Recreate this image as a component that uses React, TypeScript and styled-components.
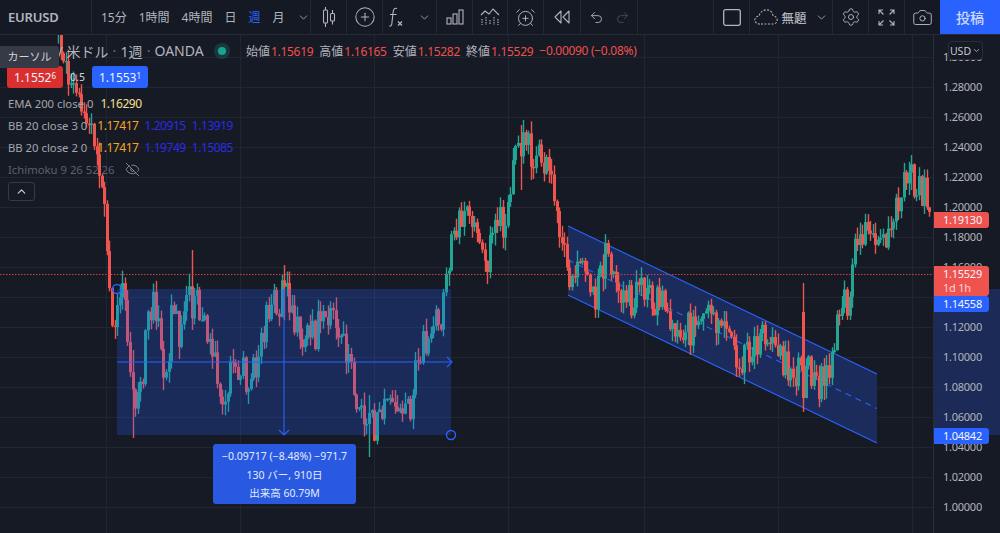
import React from 'react';
import styled, { createGlobalStyle } from 'styled-components';
import { AlarmClockPlus, Camera, ChevronDown, ChevronUp, CirclePlus, EyeOff, Redo2, Settings, Undo2 } from 'lucide-react';

const GlobalStyle = createGlobalStyle`
  html, body { margin: 0; padding: 0; background: #161a25; }
  body { font-family: 'Noto Sans', 'Noto Sans CJK JP', sans-serif; overflow: hidden; }
`;

// close prices traced in page pixels
const trace: [number, number][] = [
  [58, 35], [70, 85], [85, 115], [100, 170], [105, 210], [110, 285], [113, 320], [118, 305], [125, 300], [130, 380],
  [137, 415], [145, 350], [152, 298], [160, 335], [165, 385], [172, 305], [180, 335], [190, 300], [200, 310], [210, 340],
  [222, 408], [232, 370], [240, 362], [250, 385], [262, 340], [270, 300], [285, 297], [295, 322], [305, 345], [315, 330],
  [330, 312], [345, 350], [355, 392], [370, 432], [380, 410], [395, 392], [408, 410], [418, 365], [430, 322], [440, 318],
  [447, 270], [455, 235], [465, 205], [475, 235], [485, 265], [495, 215], [505, 222], [515, 150], [522, 138], [535, 160],
  [548, 165], [555, 220], [565, 265], [572, 272], [585, 272], [595, 292], [605, 258], [615, 295], [625, 305], [640, 295],
  [650, 295], [665, 312], [680, 322], [690, 328], [705, 305], [720, 332], [740, 365], [755, 340], [770, 345], [785, 365],
  [795, 385], [803, 335], [810, 382], [825, 382], [835, 330], [848, 300], [855, 228], [870, 230], [885, 255], [895, 215],
  [905, 170], [915, 185], [932, 197],
];

const spikes: Record<number, [number, number]> = {
  191: [250, 330], 284: [265, 320], 369: [395, 457], 520: [125, 190], 803: [283, 412], 910: [155, 190], 530: [132, 180],
  132: [350, 438], 825: [370, 400],
};

type Bar = { x: number; o: number; c: number; h: number; l: number };

const buildBars = (): Bar[] => {
  let seed = 4711;
  const rnd = () => {
    seed = (seed * 16807) % 2147483647;
    return seed / 2147483647;
  };
  const at = (x: number) => {
    const i = trace.findIndex((p) => p[0] >= x);
    if (i <= 0) return trace[0][1];
    const [x0, y0] = trace[i - 1];
    const [x1, y1] = trace[i];
    return y0 + ((y1 - y0) * (x - x0)) / (x1 - x0);
  };
  const bars: Bar[] = [];
  let prev = at(58);
  for (let x = 58; x < 930; x += 2.57) {
    let c = at(x) + (rnd() - 0.5) * 38;
    let o = prev;
    let h = Math.min(o, c) - rnd() * 13;
    let l = Math.max(o, c) + rnd() * 13;
    const key = Object.keys(spikes).find((k) => Math.abs(Number(k) - x) < 1.3);
    if (key) {
      h = Math.min(h, spikes[Number(key)][0]);
      l = Math.max(l, spikes[Number(key)][1]);
    }
    // the long red week inside the channel
    if (key === '803') {
      o = 312;
      c = 398;
    }
    bars.push({ x: Math.round(x), o, c, h, l });
    prev = c;
  }
  return bars;
};

const bars = buildBars();
const gridYs = Array.from({ length: 16 }, (_, i) => 57 + i * 30);
const gridXs = [106, 240, 374, 508, 644, 778, 912];
const axisPrices = [
  '1.30000', '1.28000', '1.26000', '1.24000', '1.22000', '1.20000', '1.18000', '1.16000', '',
  '1.12000', '1.10000', '1.08000', '1.06000', '1.04000', '1.02000', '1.00000',
];

const Page = styled.div`
  width: 1000px;
  height: 533px;
  display: flex;
  flex-direction: column;
  overflow: hidden;
  background: #161a25;
  color: #b2b5be;
`;

const Toolbar = styled.header`
  display: flex;
  height: 34px;
  flex: none;
  background: #151924;
  border-bottom: 1px solid #262a36;
`;

const Group = styled.div<{ $w: number; $gap?: number; $plain?: boolean }>`
  width: ${(p) => p.$w}px;
  flex: none;
  box-sizing: border-box;
  display: flex;
  align-items: center;
  justify-content: center;
  gap: ${(p) => p.$gap ?? 0}px;
  border-right: ${(p) => (p.$plain ? 'none' : '1px solid #232733')};
`;

const Symbol = styled(Group)`
  justify-content: flex-start;
  padding-left: 8px;
  font-size: 13px;
  font-weight: 600;
  letter-spacing: -0.2px;
`;

const Intervals = styled(Group)`
  justify-content: flex-start;
  padding-left: 9px;
  gap: 12px;
`;

const Interval = styled.span<{ $active?: boolean }>`
  font-size: 12px;
  white-space: nowrap;
  color: ${(p) => (p.$active ? '#2962ff' : '#b2b5be')};
`;

const Spacer = styled.div`
  flex: 1;
  border-right: 1px solid #232733;
`;

const PostButton = styled.button`
  width: 60px;
  flex: none;
  border: 0;
  padding: 0;
  background: #2962ff;
  color: #cdd8ff;
  font: 500 14px 'Noto Sans CJK JP', sans-serif;
`;

const CloudName = styled.span`
  font-size: 12.5px;
  font-weight: 500;
`;

const CloudChevron = styled(ChevronDown)`
  margin-left: 5px;
`;

const Icon = styled.svg.attrs({ fill: 'none', stroke: 'currentColor' })`
  flex: none;
  stroke-width: 1.1;
`;

const DimIcon = styled(Redo2)`
  color: #4a4e59;
`;

const Body = styled.main`
  flex: 1;
  display: flex;
  min-height: 0;
`;

const ChartPane = styled.section`
  position: relative;
  width: 933px;
  flex: none;
  overflow: hidden;
`;

const ChartSvg = styled.svg`
  display: block;
  width: 933px;
  height: 498px;
`;

const Legend = styled.div`
  position: absolute;
  left: 0;
  top: 7px;
  display: flex;
  flex-direction: column;
  white-space: nowrap;
`;

const TopRow = styled.div`
  display: flex;
  align-items: center;
  height: 18px;
`;

const Title = styled.div`
  width: 214px;
  padding-left: 12px;
  box-sizing: border-box;
  font-size: 14px;
  display: flex;
  color: #b2b5be;
`;

const TitleDot = styled.span`
  width: 12px;
  text-align: center;
  color: #6a6d78;
`;

const MarketDot = styled.i`
  width: 16px;
  height: 16px;
  border-radius: 50%;
  margin-right: 16px;
  background: rgba(38, 166, 154, 0.22);
  display: flex;
  align-items: center;
  justify-content: center;
  &::after {
    content: '';
    width: 8px;
    height: 8px;
    border-radius: 50%;
    background: #1aa391;
  }
`;

const Ohlc = styled.div`
  display: flex;
  font-size: 12px;
  letter-spacing: -0.3px;
  color: #f0504c;
  gap: 6px;
`;

const OhlcLabel = styled.span`
  color: #b2b5be;
  letter-spacing: 0;
  margin-right: 1px;
`;

const TradeRow = styled.div`
  display: flex;
  align-items: center;
  margin: 6px 0 4px 7px;
  height: 22px;
`;

const TradeButton = styled.div<{ $buy?: boolean }>`
  width: 56px;
  height: 22px;
  border-radius: 3px;
  display: flex;
  align-items: center;
  justify-content: center;
  font-size: 12px;
  color: #f0f3fa;
  background: ${(p) => (p.$buy ? '#2962ff' : '#d9302f')};
  sup {
    font-size: 8px;
    line-height: 1;
    margin-top: -3px;
    align-self: center;
  }
`;

const Spread = styled.span`
  width: 29px;
  text-align: center;
  font-size: 10.5px;
  color: #d1d4dc;
`;

const IndicatorRow = styled.div<{ $dim?: boolean }>`
  display: flex;
  align-items: center;
  height: 22px;
  padding-left: 8px;
  font-size: 11.3px;
  color: ${(p) => (p.$dim ? '#5d606b' : '#a3a6af')};
`;

const IndicatorName = styled.span<{ $space: number }>`
  margin-right: ${(p) => p.$space}px;
`;

const IndicatorValue = styled.span<{ $color: string }>`
  color: ${(p) => p.$color};
  font-size: 12px;
  letter-spacing: -0.45px;
  margin-right: 6px;
`;

const HiddenMark = styled(EyeOff)`
  color: #a3a6af;
`;

const CollapseButton = styled.div`
  width: 27px;
  height: 19px;
  margin: 2px 0 0 8px;
  border: 1px solid #363a45;
  border-radius: 3px;
  box-sizing: border-box;
  display: flex;
  align-items: center;
  justify-content: center;
  color: #d1d4dc;
`;

const CursorTip = styled.div`
  position: absolute;
  left: 0;
  top: 11px;
  width: 59px;
  height: 22px;
  border-radius: 0 3px 3px 0;
  background: #363a45;
  color: #d1d4dc;
  font-size: 11px;
  line-height: 22px;
  text-align: center;
`;

const MeasureTip = styled.div`
  position: absolute;
  left: 213px;
  top: 409px;
  width: 143px;
  height: 60px;
  padding: 3px 0;
  box-sizing: border-box;
  border-radius: 3px;
  background: #2859e0;
  color: #e4eaff;
  font-size: 10.5px;
  line-height: 18.5px;
  text-align: center;
`;

const PriceAxis = styled.aside`
  position: relative;
  flex: 1;
  padding-top: 7px;
  border-left: 1px solid #2a2e39;
  overflow: hidden;
`;

const AxisShade = styled.div`
  position: absolute;
  left: 0;
  right: 0;
  top: 254px;
  height: 146px;
  background: #1b2a56;
`;

const Tick = styled.div`
  position: relative;
  height: 30px;
  line-height: 30px;
  padding-left: 9px;
  font-size: 11px;
  letter-spacing: -0.25px;
  color: #b2b5be;
`;

const CurrencyButton = styled.div`
  position: absolute;
  left: 14px;
  top: 6px;
  width: 35px;
  height: 19px;
  box-sizing: border-box;
  border: 1px solid #2a2e39;
  border-radius: 4px;
  background: #151924;
  font-size: 10.5px;
  display: flex;
  align-items: center;
  justify-content: center;
  gap: 1px;
  color: #c5c8d0;
`;

const PriceTag = styled.div<{ $top: number; $h?: number; $color: string }>`
  position: absolute;
  left: -1px;
  top: ${(p) => p.$top}px;
  width: 56px;
  height: ${(p) => p.$h ?? 16}px;
  border-radius: 0 3px 3px 0;
  background: ${(p) => p.$color};
  color: #f3f5fb;
  font-size: 11px;
  letter-spacing: -0.25px;
  line-height: 15px;
  padding-left: 10px;
  box-sizing: border-box;
`;

const TagNote = styled.div`
  color: #ffd2d0;
  line-height: 14px;
`;

const CandleIcon = () => (
  <Icon width="16" height="20" viewBox="0 0 16 20">
    <path d="M4.5 0v3M4.500 16v4M11.500 3v3.500M11.500 14v3.500" />
    <rect x="2.500" y="3" width="4" height="13" rx="1" />
    <rect x="9.500" y="6.500" width="4" height="7.500" rx="1" />
  </Icon>
);

const FxIcon = () => (
  <Icon width="16" height="20" viewBox="0 0 16 20">
    <path d="M9 1.500C6.500.8 5.500 2 5.200 4.500L3.800 17c-.3 1.600-1 2.300-2.600 2M2 7.500h6.500" />
    <path d="M10 14.500l4 4M14 14.500l-4 4" strokeWidth="1.300" />
  </Icon>
);

const BarsIcon = () => (
  <Icon width="18" height="16" viewBox="0 0 18 16">
    <rect x="1" y="9" width="4" height="6" />
    <rect x="7" y="5" width="4" height="10" />
    <rect x="13" y="1" width="4" height="14" />
  </Icon>
);

const TemplatesIcon = () => (
  <Icon width="20" height="18" viewBox="0 0 20 18">
    <path d="M1 7l4-4 4 3 4-5 6 6" />
    <path d="M2 11v6M6 9v8M10 12v5M14 9v8M18 11v6" strokeDasharray="1.500 1" />
  </Icon>
);

const ReplayIcon = () => (
  <Icon width="16" height="14" viewBox="0 0 16 14">
    <path d="M7 1L1 7l6 6zM15 1L9 7l6 6z" strokeLinejoin="round" />
  </Icon>
);

const SquareIcon = () => (
  <Icon width="18" height="17" viewBox="0 0 18 17">
    <rect x="0.700" y="0.700" width="16.600" height="15.600" rx="2" strokeWidth="1.300" />
  </Icon>
);

const CloudIcon = () => (
  <Icon width="24" height="16" viewBox="0 0 24 16">
    <path
      d="M6 15C2.500 15 .8 13 .8 11 .8 9 2.500 7.300 5 7.200 5.800 3.500 9 .8 12.500.8 16 .8 18.500 3.300 19 6.500 21.500 7 23.200 8.800 23.200 11 23.200 13.200 21.300 15 19 15z"
      strokeDasharray="2 1.500"
    />
  </Icon>
);

const FullscreenIcon = () => (
  <Icon width="17" height="17" viewBox="0 0 17 17">
    <path d="M1 5V1h4M1 1l4.500 4.500M12 1h4v4M16 1l-4.500 4.500M1 12v4h4M1 16l4.500-4.500M16 12v4h-4M16 16l-4.500-4.500" />
  </Icon>
);

const Candles = () => (
  <g>
    {bars.map((b, i) => {
      const up = b.c < b.o;
      const color = up ? '#22a595' : '#f0544f';
      const top = Math.min(b.o, b.c);
      return (
        <g key={i}>
          <rect x={b.x - 0.2} y={b.h} width={1.4} height={b.l - b.h} fill={color} />
          <rect x={b.x - 1} y={top} width={3} height={Math.max(Math.abs(b.c - b.o), 1.500)} fill={color} />
        </g>
      );
    })}
  </g>
);

const Chart = () => (
  <ChartSvg viewBox="0 35 933 498">
    <g stroke="#212531" strokeWidth="1">
      {gridYs.map((y) => (
        <line key={y} x1="0" x2="933" y1={y + 0.500} y2={y + 0.500} />
      ))}
      {gridXs.map((x) => (
        <line key={x} x1={x + 0.500} x2={x + 0.500} y1="35" y2="533" />
      ))}
    </g>
    <polygon points="568,226 877,374 877,443 568,295" fill="#1b2c5c" />
    <g stroke="#2962ff" strokeWidth="1.100">
      <line x1="568" y1="226" x2="877" y2="374" />
      <line x1="568" y1="295" x2="877" y2="443" />
      <line x1="568" y1="260" x2="877" y2="408.500" strokeDasharray="6 5" />
    </g>
    <Candles />
    <line x1="0" x2="933" y1="274.500" y2="274.500" stroke="#d4403c" strokeWidth="1" strokeDasharray="1.500 1.500" />
    <rect x="117" y="289" width="334" height="146" fill="rgba(41,98,255,0.24)" />
    <g stroke="#2962ff" strokeWidth="1.100" fill="none">
      <line x1="117" x2="451" y1="362" y2="362" />
      <path d="M447 357l5 5-5 5" />
      <line x1="284" x2="284" y1="289" y2="434" />
      <path d="M279 430l5 5 5-5" />
      <circle cx="117" cy="289" r="4.500" strokeWidth="1.400" />
      <circle cx="451" cy="435" r="4.500" strokeWidth="1.400" />
    </g>
  </ChartSvg>
);

const App = () => (
  <Page>
    <GlobalStyle />
    <Toolbar>
      <Symbol $w={92}>EURUSD</Symbol>
      <Intervals $w={219}>
        <Interval>15分</Interval>
        <Interval>1時間</Interval>
        <Interval>4時間</Interval>
        <Interval>日</Interval>
        <Interval $active>週</Interval>
        <Interval>月</Interval>
        <ChevronDown size={13} strokeWidth={1.500} />
      </Intervals>
      <Group $w={36}><CandleIcon /></Group>
      <Group $w={36}><CirclePlus size={22} strokeWidth={1.100} /></Group>
      <Group $w={54} $gap={14}><FxIcon /><ChevronDown size={13} strokeWidth={1.500} /></Group>
      <Group $w={36}><BarsIcon /></Group>
      <Group $w={35}><TemplatesIcon /></Group>
      <Group $w={36}><AlarmClockPlus size={21} strokeWidth={1.100} /></Group>
      <Group $w={37}><ReplayIcon /></Group>
      <Group $w={57} $gap={11}><Undo2 size={15} strokeWidth={1.400} /><DimIcon size={15} strokeWidth={1.400} /></Group>
      <Spacer />
      <Group $w={36}><SquareIcon /></Group>
      <Group $w={83} $gap={3}>
        <CloudIcon />
        <CloudName>無題</CloudName>
        <CloudChevron size={13} strokeWidth={1.500} />
      </Group>
      <Group $w={36}><Settings size={20} strokeWidth={1.100} /></Group>
      <Group $w={36}><FullscreenIcon /></Group>
      <Group $w={35} $plain><Camera size={21} strokeWidth={1.100} /></Group>
      <PostButton>投稿</PostButton>
    </Toolbar>
    <Body>
      <ChartPane>
        <Chart />
        <Legend>
          <TopRow>
            <Title>
              <span>ユーロ / 米ドル</span>
              <TitleDot>·</TitleDot>
              <span>1週</span>
              <TitleDot>·</TitleDot>
              <span>OANDA</span>
            </Title>
            <MarketDot />
            <Ohlc>
              <span><OhlcLabel>始値</OhlcLabel>1.15619</span>
              <span><OhlcLabel>高値</OhlcLabel>1.16165</span>
              <span><OhlcLabel>安値</OhlcLabel>1.15282</span>
              <span><OhlcLabel>終値</OhlcLabel>1.15529</span>
              <span>−0.00090 (−0.08%)</span>
            </Ohlc>
          </TopRow>
          <TradeRow>
            <TradeButton>1.1552<sup>6</sup></TradeButton>
            <Spread>0.5</Spread>
            <TradeButton $buy>1.1553<sup>1</sup></TradeButton>
          </TradeRow>
          <IndicatorRow>
            <IndicatorName $space={7}>EMA 200 close 0</IndicatorName>
            <IndicatorValue $color="#f5e08f">1.16290</IndicatorValue>
          </IndicatorRow>
          <IndicatorRow>
            <IndicatorName $space={10}>BB 20 close 3 0</IndicatorName>
            <IndicatorValue $color="#f5a623">1.17417</IndicatorValue>
            <IndicatorValue $color="#2b2be8">1.20915</IndicatorValue>
            <IndicatorValue $color="#2b2be8">1.13919</IndicatorValue>
          </IndicatorRow>
          <IndicatorRow>
            <IndicatorName $space={10}>BB 20 close 2 0</IndicatorName>
            <IndicatorValue $color="#f5a623">1.17417</IndicatorValue>
            <IndicatorValue $color="#2b2be8">1.19749</IndicatorValue>
            <IndicatorValue $color="#2b2be8">1.15085</IndicatorValue>
          </IndicatorRow>
          <IndicatorRow $dim>
            <IndicatorName $space={10}>Ichimoku 9 26 52 26</IndicatorName>
            <HiddenMark size={15} strokeWidth={1.200} />
          </IndicatorRow>
          <CollapseButton><ChevronUp size={13} strokeWidth={2} /></CollapseButton>
        </Legend>
        <CursorTip>カーソル</CursorTip>
        <MeasureTip>
          <div>−0.09717 (−8.48%) −971.7</div>
          <div>130 バー, 910日</div>
          <div>出来高 60.79M</div>
        </MeasureTip>
      </ChartPane>
      <PriceAxis>
        <AxisShade />
        {axisPrices.map((p, i) => (
          <Tick key={i}>{p}</Tick>
        ))}
        <CurrencyButton>USD<ChevronDown size={9} strokeWidth={2} /></CurrencyButton>
        <PriceTag $top={177} $color="#ef5350">1.19130</PriceTag>
        <PriceTag $top={231} $h={30} $color="#ef5350">
          1.15529
          <TagNote>1d 1h</TagNote>
        </PriceTag>
        <PriceTag $top={261} $color="#2962ff">1.14558</PriceTag>
        <PriceTag $top={393} $color="#2962ff">1.04842</PriceTag>
      </PriceAxis>
    </Body>
  </Page>
);

export default App;
